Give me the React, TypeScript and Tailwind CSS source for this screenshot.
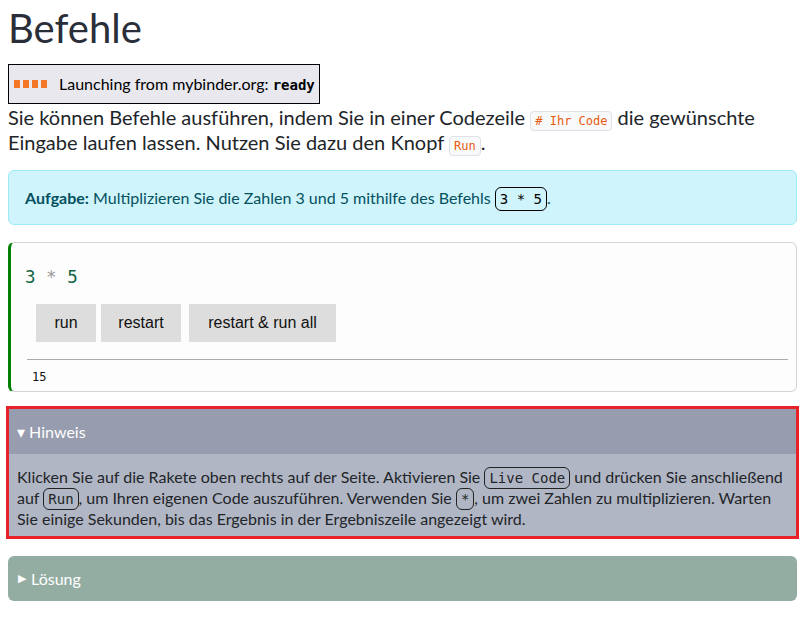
const sans = "font-['Lato',sans-serif]";
const mono = "font-['DejaVu_Sans_Mono',monospace]";

const Chip = ({ children }: { children: React.ReactNode }) => (
  <code className={`${mono} text-[12px] leading-none text-[#e8590c] bg-[#f8f9fa] border border-[#dee2e6] rounded px-1 py-[2px]`}>
    {children}
  </code>
);

const Boxed = ({ children }: { children: React.ReactNode }) => (
  <code className={`${mono} text-[14px] leading-none border border-[#222] rounded-md px-1 py-[2px]`}>{children}</code>
);

export default function App() {
  return (
    <div className={`${sans} bg-white w-[808px] h-[620px] overflow-hidden pl-2 pr-[11px] text-[#212529]`}>
      <h1 className="text-[40px] leading-[56px] text-[#2a2e38]">Befehle</h1>

      <div className="mt-[8px] inline-flex items-center h-[40px] border border-black bg-[#e8e8ee] pl-[4px] pr-[4px]">
        <div className="flex gap-[3px] ml-[1px]">
          {[0, 1, 2, 3].map((i) => (
            <span key={i} className="block w-[6px] h-[8px] bg-[#f37726]" />
          ))}
        </div>
        <span className="ml-[12px] text-[16px] text-black">
          Launching from mybinder.org: <b className={`${mono} text-[14px]`}>ready</b>
        </span>
      </div>

      <p className="text-[20px] leading-[25px] mt-[1px]">
        Sie können Befehle ausführen, indem Sie in einer Codezeile <Chip># Ihr Code</Chip> die gewünschte
        Eingabe laufen lassen. Nutzen Sie dazu den Knopf <Chip>Run</Chip>.
      </p>

      <div className="mt-[15px] h-[55px] flex items-center bg-[#cff4fc] border border-[#9eeaf9] rounded-md px-4 text-[#055160] text-[16px]">
        <span>
          <b>Aufgabe:</b> Multiplizieren Sie die Zahlen 3 und 5 mithilfe des Befehls{" "}
          <code className={`${mono} text-[14px] leading-none text-black border border-black rounded-md px-1 py-[3px]`}>3 * 5</code>.
        </span>
      </div>

      <div className="mt-[17px] border border-[#d4d4d4] border-l-[3px] border-l-[#008000] rounded-md bg-[#fdfdfd] pt-[21px] pb-[5px]">
        <div className={`${mono} text-[17.5px] leading-[26px] pl-[14px] text-[#116644]`}>
          3 <span className="text-[#999]">*</span> 5
        </div>
        <div className="flex gap-[5px] pl-[25px] mt-[14px] font-['Liberation_Sans',sans-serif] text-[16px] text-[#111]">
          <button className="bg-[#dddddd] h-[38px] w-[60px]">run</button>
          <button className="bg-[#dddddd] h-[38px] w-[80px]">restart</button>
          <button className="bg-[#dddddd] h-[38px] w-[147px] ml-[3px]">restart &amp; run all</button>
        </div>
        <div className="ml-[16px] mr-[8px] mt-[17px] border-t border-[#aaaaaa]" />
        <div className={`${mono} text-[12px] pl-[21px] pt-[8px] text-[#111]`}>15</div>
      </div>

      <div className="mt-[14px] -mx-[2px] border-[3px] border-[#e8202a]">
        <div className="bg-[#979cae] h-[45px] flex items-center px-[8px] text-white text-[16px]">▾ Hinweis</div>
        <div className="bg-[#b1b6c4] px-[8px] pt-[12px] pb-[7px] text-[16px] leading-[21px] text-[#212529]">
          Klicken Sie auf die Rakete oben rechts auf der Seite. Aktivieren Sie <Boxed>Live Code</Boxed> und drücken
          Sie anschließend auf <Boxed>Run</Boxed>, um Ihren eigenen Code auszuführen. Verwenden Sie <Boxed>*</Boxed>, um
          zwei Zahlen zu multiplizieren. Warten Sie einige Sekunden, bis das Ergebnis in der Ergebniszeile angezeigt
          wird.
        </div>
      </div>

      <div className="mt-[17px] bg-[#94ada3] rounded-md h-[45px] flex items-center px-[10px] text-white text-[16px]">
        <span className="text-[11px] mr-[5px]">▶</span>Lösung
      </div>
    </div>
  );
}
